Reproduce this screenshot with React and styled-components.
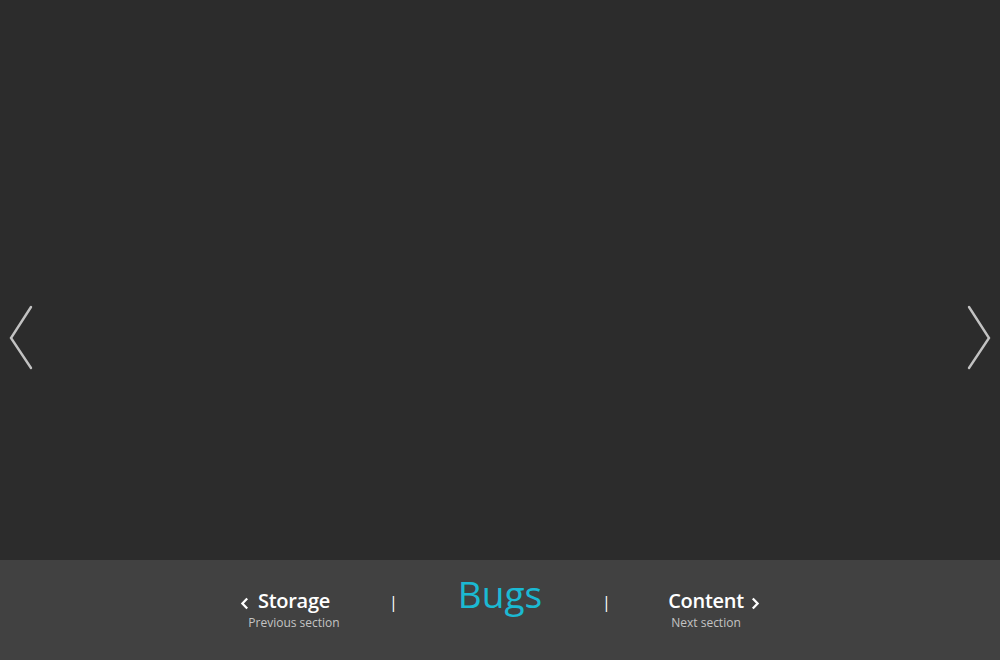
import React from 'react';
import styled, { createGlobalStyle } from 'styled-components';

const GlobalStyle = createGlobalStyle`
  html, body {
    margin: 0;
    padding: 0;
    background: #2c2c2c;
    font-family: "Open Sans", "Noto Sans", sans-serif;
  }
`;

const Page = styled.div`
  width: 1000px;
  height: 660px;
  display: flex;
  flex-direction: column;
  overflow: hidden;
`;

const Stage = styled.div`
  position: relative;
  height: 560px;
  background: #2c2c2c;
`;

const SlideArrow = styled.button`
  position: absolute;
  top: 304px;
  ${props => (props.side === 'left' ? 'left: 8px;' : 'right: 8px;')}
  width: 28px;
  height: 68px;
  padding: 0;
  border: none;
  background: transparent;
  cursor: pointer;

  svg {
    display: block;
  }
`;

const Footer = styled.nav`
  height: 100px;
  box-sizing: border-box;
  padding-top: 12px;
  background: #414141;
  display: flex;
  justify-content: center;
  align-items: baseline;
`;

const SideLink = styled.a`
  width: 190px;
  display: flex;
  flex-direction: column;
  align-items: center;
  color: #fff;
  text-decoration: none;
  cursor: pointer;
`;

const LinkTitle = styled.span`
  position: relative;
  font-size: 20px;
  font-weight: 600;
  line-height: 26px;
  letter-spacing: -0.3px;

  svg {
    position: absolute;
    top: 9px;
    ${props => (props.dir === 'prev' ? 'right: calc(100% + 9px);' : 'left: calc(100% + 7px);')}
  }
`;

const LinkCaption = styled.span`
  font-size: 12px;
  line-height: 16px;
  color: #c4c4c4;
  margin-top: 1px;
`;

const Divider = styled.span`
  width: 9px;
  text-align: center;
  font-size: 16px;
  line-height: 20px;
  color: #fff;
`;

const Current = styled.h1`
  width: 204px;
  margin: 0;
  text-align: center;
  font-size: 37px;
  font-weight: 400;
  line-height: 44px;
  color: #1bb9d3;
`;

const BigChevron = ({ dir }) => (
  <svg width="28" height="68" viewBox="0 0 28 68">
    <polyline
      points={dir === 'left' ? '23,3 3,34 23,64' : '5,3 25,34 5,64'}
      fill="none"
      stroke="#c2c2c2"
      strokeWidth="2.4"
      strokeLinecap="round"
      strokeLinejoin="miter"
    />
  </svg>
);

const SmallChevron = ({ dir }) => (
  <svg width="9" height="13" viewBox="0 0 9 13">
    <polyline
      points={dir === 'prev' ? '7.2,1.5 2.4,6.5 7.2,11.5' : '1.8,1.5 6.6,6.5 1.8,11.5'}
      fill="none"
      stroke="#fff"
      strokeWidth="2.3"
    />
  </svg>
);

export default function App() {
  return (
    <Page>
      <GlobalStyle />
      <Stage>
        <SlideArrow side="left" aria-label="Previous">
          <BigChevron dir="left" />
        </SlideArrow>
        <SlideArrow side="right" aria-label="Next">
          <BigChevron dir="right" />
        </SlideArrow>
      </Stage>
      <Footer>
        <SideLink>
          <LinkTitle dir="prev">
            <SmallChevron dir="prev" />
            Storage
          </LinkTitle>
          <LinkCaption>Previous section</LinkCaption>
        </SideLink>
        <Divider>|</Divider>
        <Current>Bugs</Current>
        <Divider>|</Divider>
        <SideLink>
          <LinkTitle dir="next">
            Content
            <SmallChevron dir="next" />
          </LinkTitle>
          <LinkCaption>Next section</LinkCaption>
        </SideLink>
      </Footer>
    </Page>
  );
}
